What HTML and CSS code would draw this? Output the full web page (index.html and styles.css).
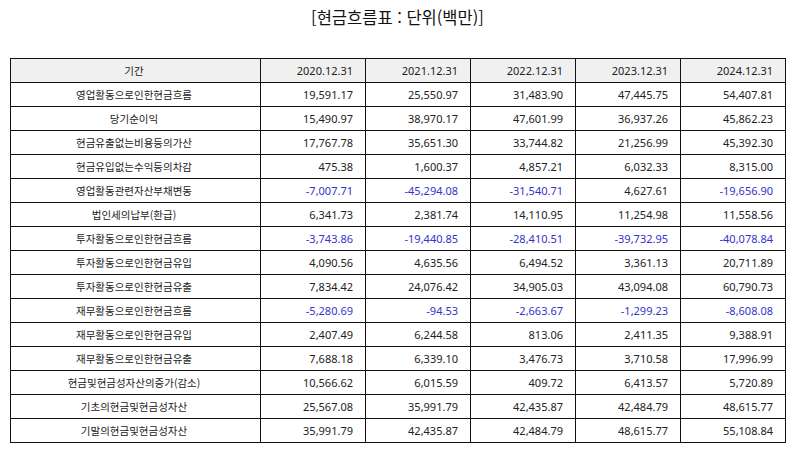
FILE: index.html
```html
<!DOCTYPE html>
<html lang="ko">
<head>
<meta charset="utf-8">
<link rel="stylesheet" href="styles.css">
</head>
<body>
<div class="title">[현금흐름표 : 단위(백만)]</div>
<table class="cf">
<thead>
<tr><th class="label">기간</th><th>2020.12.31</th><th>2021.12.31</th><th>2022.12.31</th><th>2023.12.31</th><th>2024.12.31</th></tr>
</thead>
<tbody>
<tr><td class="label">영업활동으로인한현금흐름</td><td>19,591.17</td><td>25,550.97</td><td>31,483.90</td><td>47,445.75</td><td>54,407.81</td></tr>
<tr><td class="label">당기순이익</td><td>15,490.97</td><td>38,970.17</td><td>47,601.99</td><td>36,937.26</td><td>45,862.23</td></tr>
<tr><td class="label">현금유출없는비용등의가산</td><td>17,767.78</td><td>35,651.30</td><td>33,744.82</td><td>21,256.99</td><td>45,392.30</td></tr>
<tr><td class="label">현금유입없는수익등의차감</td><td>475.38</td><td>1,600.37</td><td>4,857.21</td><td>6,032.33</td><td>8,315.00</td></tr>
<tr><td class="label">영업활동관련자산부채변동</td><td class="neg">-7,007.71</td><td class="neg">-45,294.08</td><td class="neg">-31,540.71</td><td>4,627.61</td><td class="neg">-19,656.90</td></tr>
<tr><td class="label">법인세의납부(환급)</td><td>6,341.73</td><td>2,381.74</td><td>14,110.95</td><td>11,254.98</td><td>11,558.56</td></tr>
<tr><td class="label">투자활동으로인한현금흐름</td><td class="neg">-3,743.86</td><td class="neg">-19,440.85</td><td class="neg">-28,410.51</td><td class="neg">-39,732.95</td><td class="neg">-40,078.84</td></tr>
<tr><td class="label">투자활동으로인한현금유입</td><td>4,090.56</td><td>4,635.56</td><td>6,494.52</td><td>3,361.13</td><td>20,711.89</td></tr>
<tr><td class="label">투자활동으로인한현금유출</td><td>7,834.42</td><td>24,076.42</td><td>34,905.03</td><td>43,094.08</td><td>60,790.73</td></tr>
<tr><td class="label">재무활동으로인한현금흐름</td><td class="neg">-5,280.69</td><td class="neg">-94.53</td><td class="neg">-2,663.67</td><td class="neg">-1,299.23</td><td class="neg">-8,608.08</td></tr>
<tr><td class="label">재무활동으로인한현금유입</td><td>2,407.49</td><td>6,244.58</td><td>813.06</td><td>2,411.35</td><td>9,388.91</td></tr>
<tr><td class="label">재무활동으로인한현금유출</td><td>7,688.18</td><td>6,339.10</td><td>3,476.73</td><td>3,710.58</td><td>17,996.99</td></tr>
<tr><td class="label">현금및현금성자산의증가(감소)</td><td>10,566.62</td><td>6,015.59</td><td>409.72</td><td>6,413.57</td><td>5,720.89</td></tr>
<tr><td class="label">기초의현금및현금성자산</td><td>25,567.08</td><td>35,991.79</td><td>42,435.87</td><td>42,484.79</td><td>48,615.77</td></tr>
<tr><td class="label">기말의현금및현금성자산</td><td>35,991.79</td><td>42,435.87</td><td>42,484.79</td><td>48,615.77</td><td>55,108.84</td></tr>
</tbody>
</table>
</body>
</html>
```

FILE: styles.css
```css
html, body {
  margin: 0;
  padding: 0;
  background: #ffffff;
}
body {
  padding: 0 9px 0 10px;
  font-family: "Noto Sans", "Noto Sans CJK KR", sans-serif;
  color: #222222;
}
.title {
  height: 36px;
  text-align: center;
  font-family: "Noto Sans CJK KR", sans-serif;
  font-size: 16.5px;
  line-height: 34px;
  color: #111111;
  margin-bottom: 22px;
}
.cf {
  border-collapse: collapse;
  width: 776px;
  table-layout: fixed;
  font-size: 11px;
}
.cf th, .cf td {
  border: 1px solid #111111;
  height: 24px;
  padding: 0 12px 0 9px;
  box-sizing: border-box;
  text-align: right;
  font-weight: normal;
  white-space: nowrap;
  line-height: 14px;
}
.cf th {
  background: #f0f0f0;
  color: #222222;
}
.cf .label {
  width: 250px;
  text-align: center;
  font-size: 10.5px;
  font-family: "Noto Sans CJK KR", sans-serif;
}
.cf .neg {
  color: #3333cc;
}
```
